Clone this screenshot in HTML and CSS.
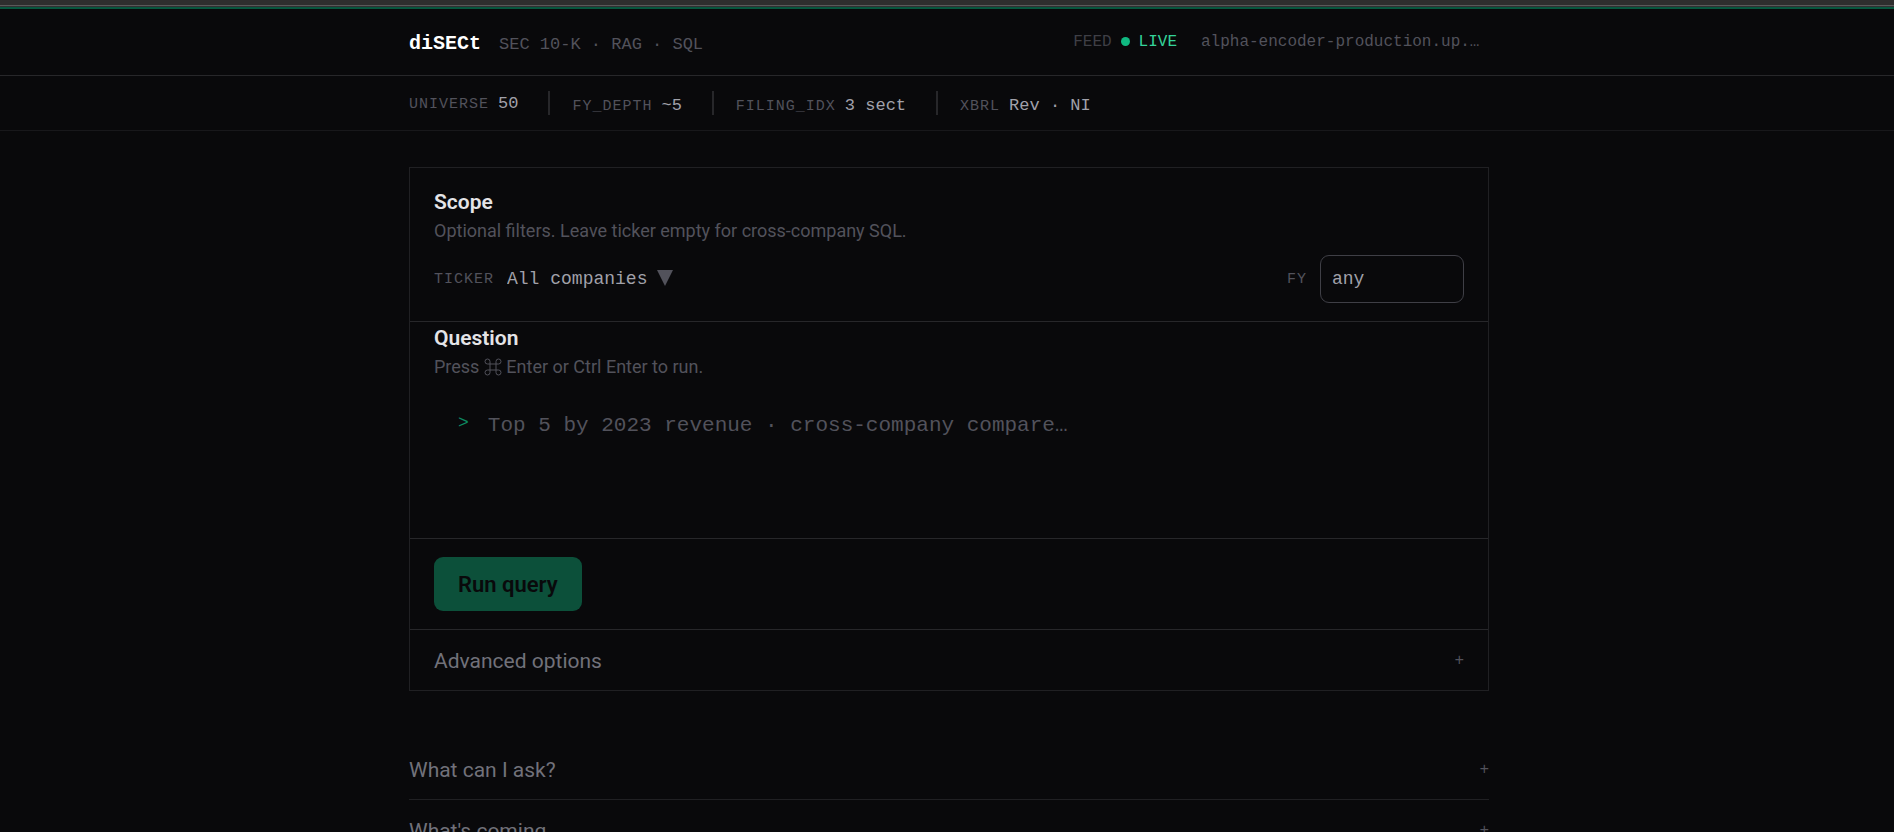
FILE: index.html
```html
<!DOCTYPE html>
<html lang="en">
<head>
  <meta charset="UTF-8">
  <meta name="viewport" content="width=device-width, initial-scale=1.0">
  <link rel="stylesheet" href="styles.css">
  <title>diSECt</title>
</head>
<body>

<div class="window-edge"></div>

<header class="topbar">
  <div class="wrap topbar-inner">
    <div class="brand">
      <h1 class="logo">diSECt</h1>
      <span class="tagline">SEC 10-K · RAG · SQL</span>
    </div>
    <div class="feed">
      <span class="feed-label">FEED</span>
      <span class="dot"></span>
      <span class="live">LIVE</span>
      <span class="host">alpha-encoder-production.up.…</span>
    </div>
  </div>
</header>

<div class="stats">
  <div class="wrap">
    <dl class="stats-list">
      <div class="stat"><dt>UNIVERSE</dt><dd>50</dd></div>
      <div class="stat"><dt>FY_DEPTH</dt><dd>~5</dd></div>
      <div class="stat"><dt>FILING_IDX</dt><dd>3 sect</dd></div>
      <div class="stat"><dt>XBRL</dt><dd>Rev · NI</dd></div>
    </dl>
  </div>
</div>

<main class="page">
  <div class="wrap">
    <form class="card" onsubmit="return false">
      <section class="scope">
        <h2>Scope</h2>
        <p class="hint">Optional filters. Leave ticker empty for cross-company SQL.</p>
        <div class="filters">
          <div class="field">
            <label for="ticker">TICKER</label>
            <select id="ticker">
              <option>All companies</option>
            </select>
            <svg class="caret" viewBox="0 0 16 18" aria-hidden="true"><path d="M0 0h16L8 16z"/></svg>
          </div>
          <div class="field">
            <label for="fy">FY</label>
            <input type="text" id="fy" placeholder="any">
          </div>
        </div>
      </section>

      <section class="question">
        <h2><label for="query">Question</label></h2>
        <p class="hint">Press
          <svg class="cmd" viewBox="0 0 18 18" aria-label="Command"><path d="M6 6h6v6H6zM6 6H3.500A2.500 2.500 0 1 1 6 3.500zM12 6V3.500A2.500 2.500 0 1 1 14.500 6zM12 12h2.500A2.500 2.500 0 1 1 12 14.500zM6 12v2.500A2.500 2.500 0 1 1 3.500 12z"/></svg>
          Enter or Ctrl Enter to run.</p>
        <div class="prompt">
          <span class="prompt-mark">&gt;</span>
          <textarea id="query" placeholder="Top 5 by 2023 revenue · cross-company compare…"></textarea>
        </div>
      </section>

      <div class="actions">
        <button type="submit" class="run">Run query</button>
      </div>

      <details class="advanced">
        <summary>Advanced options</summary>
      </details>
    </form>

    <div class="faq">
      <details>
        <summary>What can I ask?</summary>
      </details>
      <details>
        <summary>What's coming</summary>
      </details>
    </div>
  </div>
</main>

</body>
</html>
```
FILE: styles.css
```css
* {
  box-sizing: border-box;
}

body {
  margin: 0;
  height: 100vh;
  overflow: hidden;
  background-color: #09090b;
  color: #52525b;
  font-family: Roboto, "Liberation Sans", sans-serif;
  font-size: 18px;
}

h1, h2, p, dl, dd {
  margin: 0;
}

.wrap {
  max-width: 1080px;
  margin: 0 auto;
}

.topbar,
.stats,
.page {
  padding-left: 4px;
}

/* Strip above the page */
.window-edge {
  height: 7px;
  background-color: #2e2e2e;
  border-bottom: 1px solid #303032;
  box-shadow: inset 0 -1px 0 #5a5a5a;
}

/* Header */
.topbar {
  border-top: 2px solid #07563e;
  border-bottom: 1px solid #27272a;
}

.topbar-inner {
  display: flex;
  align-items: center;
  justify-content: space-between;
  height: 66px;
  padding-top: 2px;
}

.brand,
.feed,
.stat,
.logo {
  font-family: "Liberation Mono", monospace;
  font-size: 17px;
}

.brand {
  display: flex;
  align-items: baseline;
  gap: 18px;
}

.logo {
  font-size: 20px;
  color: #ffffff;
}

.feed {
  display: flex;
  align-items: center;
  gap: 9px;
  padding-bottom: 3px;
  font-size: 16px;
}

.feed-label {
  color: #3f3f46;
}

.dot {
  width: 9px;
  height: 9px;
  border-radius: 50%;
  background-color: #10b981;
}

.live {
  color: #34d399;
}

.host {
  width: 288px;
  margin-left: 15px;
}

/* Stats strip */
.stats {
  border-bottom: 1px solid #18181b;
}

.stats-list {
  display: flex;
  align-items: center;
  height: 54px;
}

.stat {
  display: flex;
  align-items: baseline;
  gap: 9px;
}

.stat + .stat {
  margin-left: 30px;
  padding-top: 5px;
  padding-left: 22px;
  border-left: 2px solid #27272a;
}

dt,
.field label {
  font-family: "Liberation Mono", monospace;
  font-size: 15px;
  letter-spacing: 1px;
}

dd {
  color: #a1a1aa;
}

/* Query card */
.card {
  margin-top: 36px;
  border: 1px solid #202023;
}

h2 {
  font-size: 21px;
  font-weight: 600;
  line-height: 30px;
  color: #e4e4e7;
}

.hint {
  line-height: 27px;
}

.scope {
  padding: 19px 24px 18px;
  border-bottom: 1px solid #27272a;
}

.filters {
  display: flex;
  align-items: center;
  justify-content: space-between;
  margin-top: 11px;
}

.field {
  display: flex;
  align-items: center;
}

.field label {
  margin-right: 13px;
}

select,
input,
textarea {
  font-family: "Liberation Mono", monospace;
  font-size: 18px;
  color: #a1a1aa;
  background: transparent;
  outline: none;
}

select {
  appearance: none;
  border: 0;
  padding: 0;
}

.caret {
  width: 16px;
  height: 18px;
  margin-left: 9px;
  fill: #52525b;
}

input {
  width: 144px;
  height: 48px;
  padding: 0 11px;
  border: 1px solid #3f3f46;
  border-radius: 9px;
}

input::placeholder {
  color: #a1a1aa;
}

.question {
  padding: 1px 24px 18px;
  border-bottom: 1px solid #27272a;
}

.cmd {
  width: 18px;
  height: 18px;
  fill: none;
  stroke: #52525b;
  vertical-align: -3px;
}

.prompt {
  display: flex;
  gap: 19px;
  padding: 29px 24px 0;
}

.prompt-mark {
  margin-top: 4px;
  font-family: "Liberation Mono", monospace;
  font-size: 18px;
  color: #0d8a62;
}

textarea {
  flex: 1;
  height: 111px;
  padding: 0;
  border: 0;
  resize: none;
  font-size: 21px;
  line-height: 34px;
}

textarea::placeholder {
  color: #52525b;
}

.actions {
  padding: 18px 24px;
  border-bottom: 1px solid #27272a;
}

.run {
  display: block;
  height: 54px;
  padding: 0 24px;
  border: 0;
  border-radius: 9px;
  background-color: #0c503a;
  color: #09090b;
  font-family: inherit;
  font-size: 22px;
  font-weight: 600;
}

/* Collapsible rows */
summary {
  display: flex;
  align-items: center;
  justify-content: space-between;
  height: 60px;
  padding-top: 2px;
  font-size: 21px;
  color: #71717a;
  list-style: none;
  cursor: pointer;
}

summary::after {
  content: "+";
  font-family: "Liberation Mono", monospace;
  font-size: 16px;
  color: #52525b;
}

.advanced summary {
  padding: 2px 24px 0;
}

.faq {
  margin-top: 48px;
}

.faq details {
  border-bottom: 1px solid #202023;
}
```
